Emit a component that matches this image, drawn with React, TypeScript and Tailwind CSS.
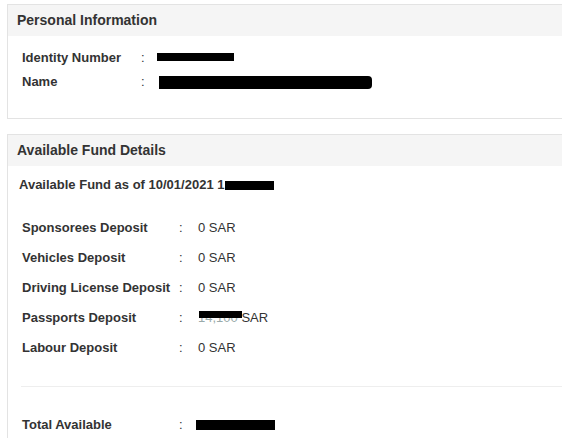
import React from 'react'

interface FundRow {
  label: string
  value: React.ReactNode
}

function Redact({ className }: { className: string }) {
  return <span className={`absolute bg-black ${className}`} />
}

const fundRows: FundRow[] = [
  { label: 'Sponsorees Deposit', value: '0 SAR' },
  { label: 'Vehicles Deposit', value: '0 SAR' },
  { label: 'Driving License Deposit', value: '0 SAR' },
  {
    label: 'Passports Deposit',
    value: (
      <span className="relative inline-block">
        <span className="text-[#9aa]">14,100</span> SAR
        <Redact className="left-[1px] top-[3px] w-[43px] h-[7px]" />
      </span>
    ),
  },
  { label: 'Labour Deposit', value: '0 SAR' },
]

function PanelHeader({ title }: { title: string }) {
  return (
    <div className="h-[31px] bg-[#f5f5f5] pl-[9px] flex items-center text-[14px] font-bold text-[#333]">
      {title}
    </div>
  )
}

export default function App() {
  return (
    <div className="w-[562px] h-[438px] overflow-hidden bg-white font-['Liberation_Sans',Arial,sans-serif] text-[#333]">
      <div className="w-[620px] pl-[7px] pt-[4px]">
        {/* Personal information */}
        <section className="border border-[#e3e3e3]">
          <PanelHeader title="Personal Information" />
          <div className="pt-[10px] pb-[24px] pl-[14px] text-[13px]">
            <div className="flex items-center h-[24px]">
              <span className="w-[119px] font-bold">Identity Number</span>
              <span className="w-[16px]">:</span>
              <span className="relative inline-block w-[78px] h-[15px]">
                <Redact className="left-0 top-[2px] w-[77px] h-[8px]" />
              </span>
            </div>
            <div className="flex items-center h-[24px]">
              <span className="w-[119px] font-bold">Name</span>
              <span className="w-[16px]">:</span>
              <span className="relative inline-block w-[216px] h-[15px]">
                <Redact className="left-[2px] top-[1px] w-[213px] h-[13px] rounded-r-[4px]" />
              </span>
            </div>
          </div>
        </section>

        {/* Available fund details */}
        <section className="mt-[15px] border border-[#e3e3e3] border-b-0 h-[320px]">
          <PanelHeader title="Available Fund Details" />
          <div className="pt-[9px] pl-[11px] h-[20px] box-content flex items-center text-[13px] font-bold">
            Available Fund as of 10/01/2021 1
            <span className="inline-block bg-black w-[49px] h-[9px] ml-[1px]" />
          </div>
          <div className="mt-[18px] pl-[14px] text-[13px]">
            {fundRows.map((row) => (
              <div key={row.label} className="flex items-center h-[30px]">
                <span className="w-[157px] font-bold">{row.label}</span>
                <span className="w-[19px]">:</span>
                <span>{row.value}</span>
              </div>
            ))}
          </div>
          <div className="mt-[23px] ml-[13px] border-t border-[#eeeeee]" />
          <div className="mt-[23px] pl-[14px] text-[13px] flex items-center h-[30px]">
            <span className="w-[157px] font-bold">Total Available</span>
            <span className="w-[17px]">:</span>
            <span className="inline-block bg-black w-[79px] h-[10px]" />
          </div>
        </section>
      </div>
    </div>
  )
}
